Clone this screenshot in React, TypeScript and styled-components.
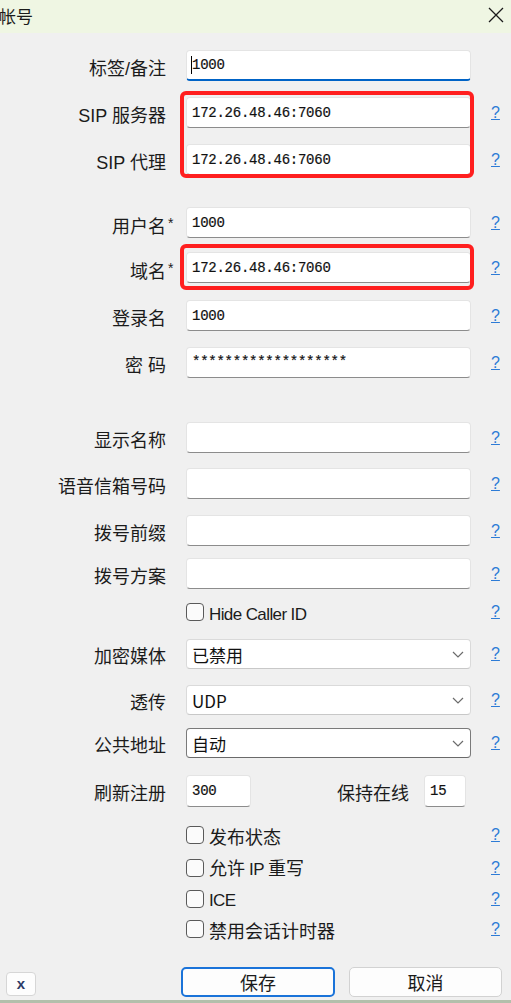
import React from 'react';
import styled, { createGlobalStyle } from 'styled-components';

const GlobalStyle = createGlobalStyle`
  html, body {
    margin: 0;
    padding: 0;
    background: #f0f0f0;
    overflow: hidden;
  }
  body {
    font-family: "Liberation Sans", "Noto Sans CJK SC", sans-serif;
    color: #1b1b1b;
  }
`;

const Window = styled.div`
  width: 511px;
  height: 1003px;
  box-sizing: border-box;
  display: flex;
  flex-direction: column;
  background: #f0f0f0;
  border-bottom: 3px solid #b3bfab;
`;

const TitleBar = styled.div`
  height: 33px;
  flex: none;
  display: flex;
  align-items: center;
  justify-content: space-between;
  background: #eff6e3;
`;

const Title = styled.div`
  font-family: "Noto Sans CJK SC", sans-serif;
  font-size: 17px;
  line-height: 1;
  margin-left: -1px;
  padding-bottom: 2px;
`;

const CloseButton = styled.button`
  width: 30px;
  height: 33px;
  border: 0;
  padding: 0 0 4px 0;
  background: transparent;
  display: flex;
  align-items: center;
  justify-content: center;
`;

const Form = styled.div`
  display: flex;
  flex-direction: column;
`;

const Row = styled.div<{ $mt: number; $h?: number }>`
  display: grid;
  grid-template-columns: 166px 285px auto;
  column-gap: 20px;
  align-items: center;
  margin-top: ${({ $mt }) => $mt}px;
  height: ${({ $h }) => $h ?? 31}px;
`;

const Label = styled.div`
  text-align: right;
  font-size: 18px;
  line-height: 1;
  padding-top: 6px;
  white-space: nowrap;
`;

const Required = styled.span`
  display: inline-block;
  width: 0;
  font-size: 14px;
  vertical-align: 5px;
  text-indent: 2px;
`;

const TextBox = styled.div<{ $focused?: boolean; $secret?: boolean; $w?: number }>`
  box-sizing: border-box;
  height: 100%;
  width: ${({ $w }) => ($w ? `${$w}px` : '100%')};
  background: #fff;
  border: 1px solid #e4e4e4;
  border-bottom: ${({ $focused }) => ($focused ? '2px solid #0063c6' : '1px solid #8c8c8c')};
  border-radius: 4px;
  display: flex;
  align-items: ${({ $secret }) => ($secret ? 'flex-start' : 'center')};
  padding: ${({ $secret }) => ($secret ? '6px 5px 0' : '0 5px')};
  font-family: "Liberation Mono", monospace;
  font-size: 14px;
  letter-spacing: -0.25px;
  -webkit-text-stroke: 0.2px #111;
  color: #111;
  white-space: nowrap;
  overflow: hidden;
`;

const Caret = styled.span`
  width: 1px;
  height: 18px;
  background: #000;
  margin-left: -1px;
`;

const Combo = styled.div<{ $active?: boolean }>`
  box-sizing: border-box;
  height: 100%;
  background: #fff;
  border: 1px solid ${({ $active }) => ($active ? '#7a7a7a' : '#dadada')};
  border-bottom-color: ${({ $active }) => ($active ? '#6a6a6a' : '#c8c8c8')};
  border-radius: 4px;
  display: flex;
  align-items: center;
  justify-content: space-between;
  padding: 0 6px 0 5px;
  font-family: "Noto Sans CJK SC", sans-serif;
  font-size: 17px;
  color: #111;
`;

const Help = styled.a`
  font-family: "Liberation Sans", sans-serif;
  font-size: 16px;
  line-height: 1;
  color: #2d7bd6;
  text-decoration: underline;
  cursor: pointer;
`;

const Marked = styled.div<{ $mt: number }>`
  position: relative;
  display: flex;
  flex-direction: column;
  margin-top: ${({ $mt }) => $mt}px;
`;

const RedFrame = styled.div<{ $top: number; $bottom: number }>`
  position: absolute;
  left: 180px;
  width: 294px;
  top: ${({ $top }) => -$top}px;
  bottom: ${({ $bottom }) => -$bottom}px;
  box-sizing: border-box;
  border: 4px solid #ff1f1f;
  border-radius: 6px;
  pointer-events: none;
`;

const CheckLabel = styled.label`
  display: flex;
  align-items: center;
  gap: 5px;
  font-family: "Noto Sans CJK SC", sans-serif;
  font-size: 18px;
  line-height: 1;
  white-space: nowrap;
`;

const CheckBox = styled.span`
  box-sizing: border-box;
  width: 18px;
  height: 18px;
  border: 1px solid #5a5a5a;
  border-radius: 4px;
  background: #fbfbfb;
  flex: none;
`;

const CheckText = styled.span`
  padding-top: 1px;
`;

const Latin = styled.span`
  font-family: "Liberation Sans", sans-serif;
  font-size: 17px;
  letter-spacing: -0.6px;
`;

const Pair = styled.div`
  display: flex;
  align-items: center;
  justify-content: space-between;
  height: 100%;
  padding-right: 5px;
`;

const PairGroup = styled.div`
  display: flex;
  align-items: center;
  gap: 15px;
  height: 100%;
`;

const InlineLabel = styled.span`
  font-size: 18px;
  line-height: 1;
  padding-top: 6px;
`;

const Footer = styled.div`
  display: flex;
  align-items: flex-end;
  margin-top: 28px;
  padding-left: 6px;
`;

const SmallButton = styled.button`
  box-sizing: border-box;
  width: 30px;
  height: 24px;
  margin-bottom: 1px;
  background: #fdfdfd;
  border: 1px solid #d6d6d6;
  border-radius: 4px;
  font-family: "Liberation Sans", sans-serif;
  font-weight: bold;
  font-size: 15px;
  color: #2c3a66;
  padding: 0 0 2px;
`;

const DialogButton = styled.button<{ $primary?: boolean; $w: number; $ml: number }>`
  box-sizing: border-box;
  width: ${({ $w }) => $w}px;
  height: 30px;
  margin-left: ${({ $ml }) => $ml}px;
  background: #fdfdfd;
  border: ${({ $primary }) => ($primary ? '2px solid #1a73d9' : '1px solid #d2d2d2')};
  border-radius: 5px;
  font-family: "Noto Sans CJK SC", sans-serif;
  font-size: 18px;
  color: #1b1b1b;
  padding: 0;
`;

const Chevron = () => (
  <svg width="12" height="7" viewBox="0 0 12 7">
    <path d="M1 1l5 5 5-5" fill="none" stroke="#6b6b6b" strokeWidth="1.2" />
  </svg>
);

const CloseIcon = () => (
  <svg width="16" height="16" viewBox="0 0 16 16">
    <path d="M1 1l14 14M15 1L1 15" stroke="#1b1b1b" strokeWidth="1.3" />
  </svg>
);

type FieldRowProps = {
  label?: React.ReactNode;
  mt: number;
  h?: number;
  help?: boolean;
  children?: React.ReactNode;
};

const FieldRow = ({ label, mt, h, help = true, children }: FieldRowProps) => (
  <Row $mt={mt} $h={h}>
    <Label>{label}</Label>
    {children}
    {help ? <Help>?</Help> : <span />}
  </Row>
);

const Check = ({ text }: { text: React.ReactNode }) => (
  <CheckLabel>
    <CheckBox />
    <CheckText>{text}</CheckText>
  </CheckLabel>
);

export default function App() {
  return (
    <>
      <GlobalStyle />
      <Window>
        <TitleBar>
          <Title>帐号</Title>
          <CloseButton>
            <CloseIcon />
          </CloseButton>
        </TitleBar>
        <Form>
          <FieldRow label="标签/备注" mt={17} help={false}>
            <TextBox $focused>
              <Caret />
              1000
            </TextBox>
          </FieldRow>

          <Marked $mt={16}>
            <FieldRow label="SIP 服务器" mt={0}>
              <TextBox>172.26.48.46:7060</TextBox>
            </FieldRow>
            <FieldRow label="SIP 代理" mt={16}>
              <TextBox>172.26.48.46:7060</TextBox>
            </FieldRow>
            <RedFrame $top={6} $bottom={3} />
          </Marked>

          <FieldRow
            label={
              <>
                用户名<Required>*</Required>
              </>
            }
            mt={32}
          >
            <TextBox>1000</TextBox>
          </FieldRow>

          <Marked $mt={14}>
            <FieldRow
              label={
                <>
                  域名<Required>*</Required>
                </>
              }
              mt={0}
            >
              <TextBox>172.26.48.46:7060</TextBox>
            </FieldRow>
            <RedFrame $top={8} $bottom={7} />
          </Marked>

          <FieldRow label="登录名" mt={17}>
            <TextBox>1000</TextBox>
          </FieldRow>
          <FieldRow label="密 码" mt={16}>
            <TextBox $secret>*******************</TextBox>
          </FieldRow>

          <FieldRow label="显示名称" mt={44}>
            <TextBox />
          </FieldRow>
          <FieldRow label="语音信箱号码" mt={15}>
            <TextBox />
          </FieldRow>
          <FieldRow label="拨号前缀" mt={16}>
            <TextBox />
          </FieldRow>
          <FieldRow label="拨号方案" mt={12}>
            <TextBox />
          </FieldRow>

          <FieldRow mt={12} h={22}>
            <Check text={<Latin>Hide Caller ID</Latin>} />
          </FieldRow>

          <FieldRow label="加密媒体" mt={16} h={30}>
            <Combo>
              已禁用
              <Chevron />
            </Combo>
          </FieldRow>
          <FieldRow label="透传" mt={16} h={30}>
            <Combo>
              UDP
              <Chevron />
            </Combo>
          </FieldRow>
          <FieldRow label="公共地址" mt={13} h={30}>
            <Combo $active>
              自动
              <Chevron />
            </Combo>
          </FieldRow>

          <FieldRow label="刷新注册" mt={17} h={32} help={false}>
            <Pair>
              <TextBox $w={65}>300</TextBox>
              <PairGroup>
                <InlineLabel>保持在线</InlineLabel>
                <TextBox $w={42}>15</TextBox>
              </PairGroup>
            </Pair>
          </FieldRow>

          <FieldRow mt={18} h={20}>
            <Check text="发布状态" />
          </FieldRow>
          <FieldRow mt={12} h={20}>
            <Check
              text={
                <>
                  允许 <Latin>IP</Latin> 重写
                </>
              }
            />
          </FieldRow>
          <FieldRow mt={11} h={20}>
            <Check text={<Latin>ICE</Latin>} />
          </FieldRow>
          <FieldRow mt={11} h={20}>
            <Check text="禁用会话计时器" />
          </FieldRow>

          <Footer>
            <SmallButton>x</SmallButton>
            <DialogButton $primary $w={154} $ml={145}>
              保存
            </DialogButton>
            <DialogButton $w={153} $ml={14}>
              取消
            </DialogButton>
          </Footer>
        </Form>
      </Window>
    </>
  );
}
